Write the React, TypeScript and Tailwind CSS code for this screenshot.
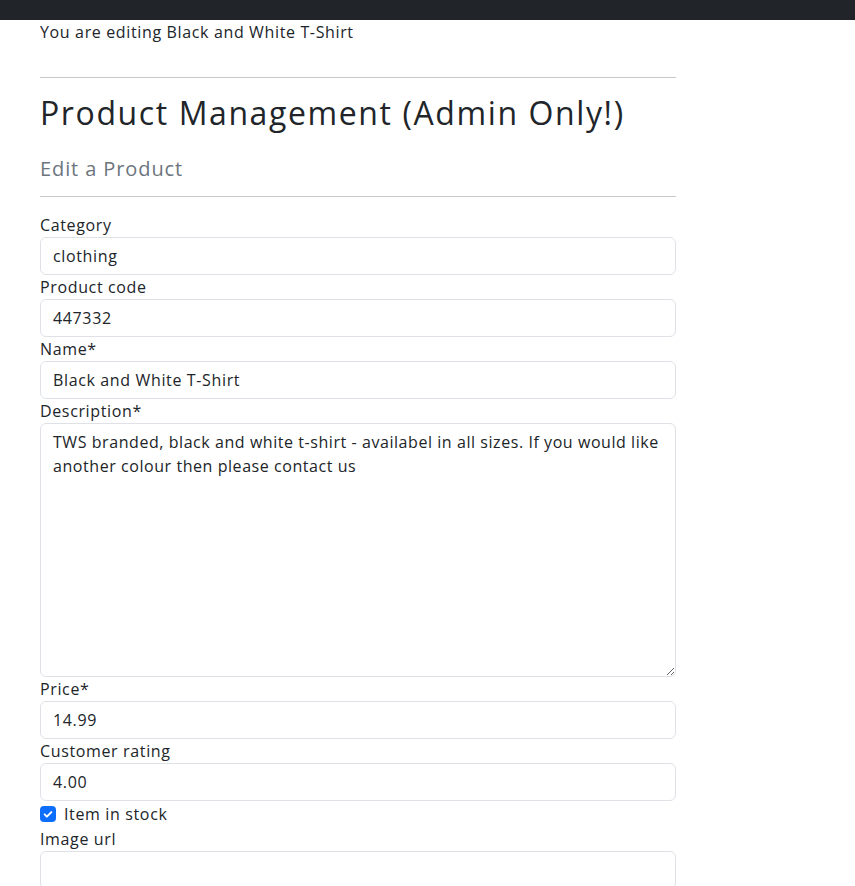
import React from 'react';

const font = { fontFamily: '"Open Sans", "Liberation Sans", sans-serif' };

function Field({ label, value }: { label: string; value: string }) {
  return (
    <div className="flex flex-col">
      <label className="leading-6 text-[#212529]">{label}</label>
      <input
        type="text"
        defaultValue={value}
        className="h-[38px] rounded-md border border-[#dee2e6] px-3 py-1.5 leading-6 tracking-[0.04em] text-[#212529] outline-none"
      />
    </div>
  );
}

export default function App() {
  return (
    <div className="min-h-screen bg-white text-base tracking-[0.04em] text-[#212529]" style={font}>
      <div className="h-5 w-full bg-[#212529]" />
      <div className="ml-10 w-[636px]">
        <p className="leading-6">You are editing Black and White T-Shirt</p>
        <hr className="mt-[33px] mb-4 border-t border-[#c8c8c8]" />
        <h2 className="mb-2 text-[32px] leading-[38px] tracking-[0.05em]">Product Management (Admin Only!)</h2>
        <h5 className="mt-[25px] text-xl leading-6 tracking-[0.045em] text-[#6c757d]">Edit a Product</h5>
        <hr className="mt-[15px] mb-4 border-t border-[#c8c8c8]" />
        <form className="flex flex-col">
          <Field label="Category" value="clothing" />
          <Field label="Product code" value="447332" />
          <Field label="Name*" value="Black and White T-Shirt" />
          <div className="flex flex-col">
            <label className="leading-6">Description*</label>
            <textarea
              defaultValue="TWS branded, black and white t-shirt - availabel in all sizes. If you would like another colour then please contact us"
              className="h-[254px] rounded-md border border-[#dee2e6] px-3 py-1.5 leading-6 tracking-[0.035em] text-[#212529] outline-none"
            />
          </div>
          <Field label="Price*" value="14.99" />
          <Field label="Customer rating" value="4.00" />
          <div className="mt-px flex h-6 items-center gap-2">
            <span className="flex h-4 w-4 items-center justify-center rounded bg-[#0d6efd]">
              <svg viewBox="0 0 16 16" className="h-3 w-3" fill="none" stroke="white" strokeWidth="2.6" strokeLinecap="round" strokeLinejoin="round">
                <path d="M3.5 8.5l3 3 6-6" />
              </svg>
            </span>
            <span className="leading-6">Item in stock</span>
          </div>
          <div className="mt-px">
            <Field label="Image url" value="" />
          </div>
        </form>
      </div>
    </div>
  );
}
